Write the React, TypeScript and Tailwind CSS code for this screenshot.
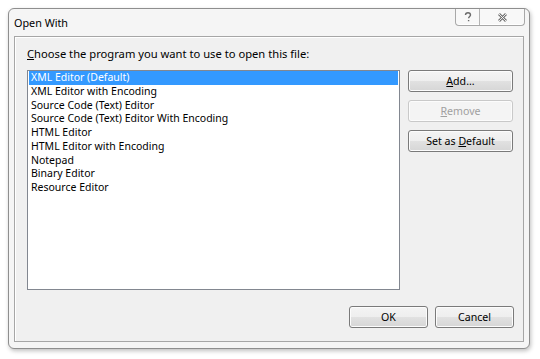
import React from 'react';

const programs = [
  'XML Editor (Default)',
  'XML Editor with Encoding',
  'Source Code (Text) Editor',
  'Source Code (Text) Editor With Encoding',
  'HTML Editor',
  'HTML Editor with Encoding',
  'Notepad',
  'Binary Editor',
  'Resource Editor',
];

function DlgButton({
  children,
  disabled = false,
  className = '',
}: {
  children: React.ReactNode;
  disabled?: boolean;
  className?: string;
}) {
  return (
    <button
      type="button"
      disabled={disabled}
      className={
        'h-[22px] rounded-[3px] border text-[10.6px] leading-none shadow-[inset_0_0_0_1px_#fcfcfc] ' +
        (disabled
          ? 'border-[#c9c9c9] bg-[#f4f4f4] text-[#a0a0a0] '
          : 'border-[#7a7a7a] bg-[linear-gradient(#f4f4f4_0%,#eeeeee_50%,#e1e1e1_51%,#d6d6d6_100%)] text-black ') +
        className
      }
    >
      {children}
    </button>
  );
}

export default function App() {
  const selected = 0;

  return (
    <div
      className="w-[540px] h-[359px] bg-white pt-[8px] pl-[8px] select-none"
      style={{ fontFamily: '"Noto Sans", "Liberation Sans", sans-serif' }}
    >
      {/* window frame */}
      <div className="w-[522px] h-[341px] rounded-[6px] border border-[#8e8e8e] bg-[#f5f5f5] shadow-[1px_2px_4px_rgba(0,0,0,0.25)] flex flex-col px-[5px] pb-[6px]">
        {/* title bar */}
        <div className="h-[27px] flex items-start justify-between">
          <span className="pt-[7px] pl-[0px] text-[10.8px] leading-[14px] text-black">Open With</span>
          <div className="flex -mr-[1px] h-[17px] border border-t-0 border-[#a8a8a8] rounded-b-[4px] bg-[#f8f8f8] shadow-[inset_0_-1px_0_#ffffff]">
            <div className="w-[24px] flex items-center justify-center border-r border-[#b4b4b4]">
              <svg width="8" height="10" viewBox="0 0 8 10">
                <path
                  d="M1.5 3 C1.5 1.4 2.6 0.8 4 0.8 C5.6 0.8 6.5 1.7 6.5 3 C6.5 4.4 4.6 4.8 4.6 6.3 M4.6 8 L4.6 9.3"
                  fill="none"
                  stroke="#6c6c6c"
                  strokeWidth="1.4"
                />
              </svg>
            </div>
            <div className="w-[44px] flex items-center justify-center">
              <svg width="11" height="9" viewBox="0 0 11 9">
                <path d="M2 1 L9 8 M9 1 L2 8" stroke="#747474" strokeWidth="2.8" />
                <path d="M2 1 L9 8 M9 1 L2 8" stroke="#f8f8f8" strokeWidth="0.9" />
              </svg>
            </div>
          </div>
        </div>

        {/* client area */}
        <div className="flex-1 border border-[#a6a6a6] bg-[#f0f0f0] shadow-[inset_1px_1px_0_#ffffff] flex flex-col pl-[12px] pr-[9px] pb-[13px]">
          <p className="mt-[10px] h-[14px] text-[11.2px] leading-[14px] text-black whitespace-nowrap">
            <span className="underline">C</span>hoose the program you want to use to open this file:
          </p>

          <div className="mt-[9px] flex gap-[8px]">
            {/* list box */}
            <div className="w-[373px] h-[220px] border border-[#828790] bg-white px-[1px]">
              {programs.map((p, i) => (
                <div
                  key={p}
                  className={
                    'h-[13.75px] pl-[2px] text-[10.5px] leading-[13.75px] whitespace-nowrap ' +
                    (i === selected ? 'bg-[#3399ff] text-white' : 'text-black')
                  }
                >
                  {p}
                </div>
              ))}
            </div>

            {/* side buttons */}
            <div className="w-[105px] flex flex-col gap-[8px]">
              <DlgButton>
                <span className="underline">A</span>dd...
              </DlgButton>
              <DlgButton disabled>
                <span className="underline">R</span>emove
              </DlgButton>
              <DlgButton>
                Set as <span className="underline">D</span>efault
              </DlgButton>
            </div>
          </div>

          <div className="mt-auto flex justify-end gap-[7px]">
            <DlgButton className="w-[79px]">OK</DlgButton>
            <DlgButton className="w-[79px]">Cancel</DlgButton>
          </div>
        </div>
      </div>
    </div>
  );
}
